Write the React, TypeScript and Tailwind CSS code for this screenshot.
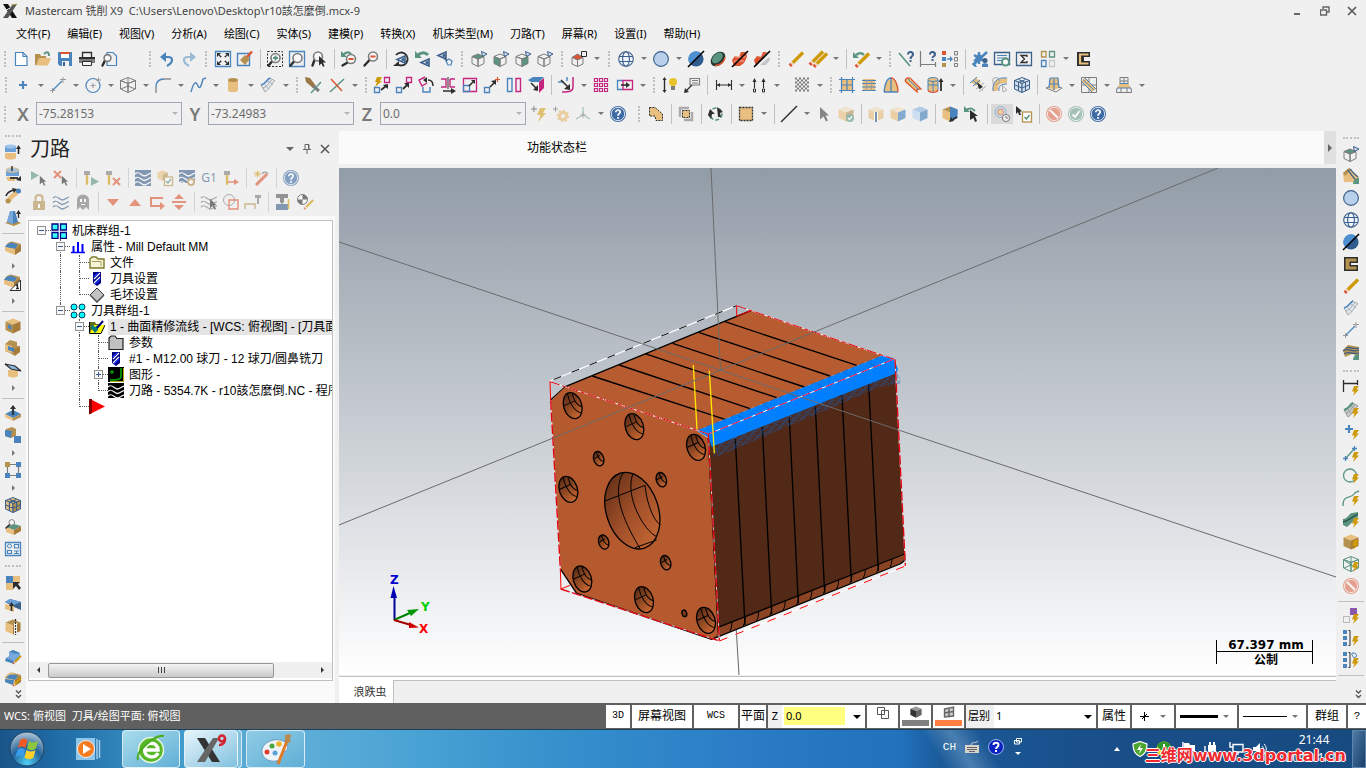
import React from 'react';

const BLUE = '#4a84bd';
const NAVY = '#3a5f8a';
const TAN = '#e8bf7e';
const WOOD = '#b5914f';
const GREEN = '#5a9480';
const RED = '#dc5430';
const PINK = '#c6257f';
const GOLD = '#cf9a08';
const INK = '#2d2d2d';
const GRAY = '#7d7d7d';

/* ---------- shared glyph parts ---------- */

const line = (d: string, c: string = INK, w: number = 1) => (
  <path d={d} fill="none" stroke={c} strokeWidth={w} />
);

const fill = (d: string, c: string) => <path d={d} fill={c} />;

const Cube = ({ top, left, right, edge = 'none' }: { top: string; left: string; right: string; edge?: string }) => (
  <g stroke={edge} strokeWidth={1} strokeLinejoin="round">
    <path d="M8 0.500L15.500 3.500L8 6.500L0.500 3.500Z" fill={top} />
    <path d="M0.500 3.500L8 6.500V15.500L0.500 12Z" fill={left} />
    <path d="M15.500 3.500L8 6.500V15.500L15.500 12Z" fill={right} />
  </g>
);

const Bolt = () => <path d="M11 6H16L13.500 9.500H16L10 16L11.500 11.500H9Z" fill={GOLD} />;

const Lens = ({ x = 9, y = 6, r = 4.5 }: { x?: number; y?: number; r?: number }) => (
  <g fill="none" strokeLinecap="round">
    <path d={`M${x - r + 1} ${y + r - 1}L1.500 14.500`} stroke={INK} strokeWidth={2.4} />
    <circle cx={x} cy={y} r={r} stroke={GRAY} strokeWidth={1.6} fill="#f7f7f7" />
  </g>
);

const Eye = ({ x = 0, y = 0 }: { x?: number; y?: number }) => (
  <g transform={`translate(${x} ${y})`}>
    <path d="M9 1L1 4.500L9 8Z" fill="none" stroke={NAVY} strokeWidth={1.6} />
    <circle cx={7} cy={4.5} r={1.5} fill={NAVY} />
  </g>
);

const Pencil = ({ x = 0, y = 0 }: { x?: number; y?: number }) => (
  <g transform={`translate(${x} ${y})`} strokeWidth={3.4}>
    <path d="M15 1.500L4.500 12" stroke={GOLD} />
    <path d="M3.500 13L1.800 14.700" stroke={RED} />
    <path d="M4.800 11.700L3.500 13" stroke="#f0d9c8" />
  </g>
);

const Arrow = () => <path d="M4 1L13 9.500H9.500L12 14.500L10 15.500L7.500 10.500L4 13.500Z" fill={INK} />;

const Waves = ({ c }: { c: string }) => (
  <g fill="none" stroke={c} strokeWidth={1.3}>
    <path d="M0 4C4 0 6 6 9 6S13 4 16 3" />
    <path d="M0 8.500C4 4.500 6 10.500 9 10.500S13 8.500 16 7.500" />
    <path d="M0 13C4 9 6 15 9 15S13 13 16 12" />
  </g>
);

const Ribbon = ({ c = '#a9a9a9', f = 'none' }: { c?: string; f?: string }) => (
  <g>
    <path d="M1 8C6 7 6 3 10 1L15 4C11 6 11 11 5 15Z" fill={f} stroke={c} strokeWidth={1} />
    <path d="M3 11C8 10 8 5 12.500 2.500M5 7.500L9 12M8 4L13 8" fill="none" stroke={c} strokeWidth={0.9} />
    <path d="M1 8C6 7 6 3 10 1" fill="none" stroke={BLUE} strokeWidth={1.4} />
  </g>
);

const Holder = () => (
  <g>
    <path d="M1 1H7V5H1Z" fill={GRAY} />
    <path d="M2.800 5H5.200V14L4 15.500L2.800 14Z" fill={GOLD} />
  </g>
);

const Help = () => (
  <g>
    <circle cx={8} cy={8} r={8} fill="#3f6ba5" />
    <circle cx={8} cy={8} r={6.7} fill="none" stroke="#fff" strokeWidth={0.8} />
    <path d="M5.800 6.200C5.800 3.200 10.400 3.400 10.200 6.200C10 7.800 8 7.700 8 9.800" fill="none" stroke="#fff" strokeWidth={1.7} />
    <rect x={7.1} y={11} width={1.8} height={1.8} fill="#fff" />
  </g>
);

const Stop = () => (
  <g opacity={0.5}>
    <circle cx={8} cy={8} r={8} fill={RED} />
    <circle cx={8} cy={8} r={6.600} fill="none" stroke="#fff" strokeWidth={0.8} />
    <path d="M4 4L12 12" stroke="#fff" strokeWidth={2} />
  </g>
);

const Globe = () => (
  <g fill="none" stroke={NAVY} strokeWidth={1.1}>
    <circle cx={8} cy={8} r={7.3} fill="#eef4fa" />
    <ellipse cx={8} cy={8} rx={3.4} ry={7.3} />
    <path d="M1.500 5.500H14.500M1.500 10.500H14.500" />
  </g>
);

const Ball = () => <circle cx={8} cy={8} r={7.4} fill="#b9d0ea" stroke={NAVY} strokeWidth={1.1} />;

const HalfBall = () => (
  <g>
    <circle cx={8} cy={8} r={7.6} fill="#2f5b8f" />
    <path d="M13.400 2.600A7.600 7.600 0 0 0 2.600 13.400Z" fill="#4c90d2" />
    <path d="M0 16L16 0" stroke="#000" strokeWidth={1.6} />
  </g>
);

const ViewCube = ({ face }: { face?: 'top' | 'left' | 'right' }) => (
  <g strokeLinejoin="round" strokeWidth={1} stroke={GRAY}>
    <path d="M7 3L13 5.500L7 8L1 5.500Z" fill={face === 'top' ? GREEN : 'none'} />
    <path d="M1 5.500L7 8V15.500L1 12.500Z" fill={face === 'left' ? GREEN : 'none'} />
    <path d="M13 5.500L7 8V15.500L13 12.500Z" fill={face === 'right' ? GREEN : 'none'} />
    <path d="M10.500 0.500L16 3L11.500 5.500Z" fill="#d7e2f0" stroke={NAVY} />
  </g>
);

const Slab = ({ blue = true }: { blue?: boolean }) => (
  <g>
    <path d="M0 7C2 3 4 2 7 1.500L16 4L10 9Z" fill={WOOD} />
    <path d="M0 7C2 4 4 3 7 2.500L13 5L10 9Z" fill={blue ? BLUE : WOOD} />
    <path d="M0 7L10 9V15L0 11Z" fill={TAN} />
    <path d="M16 4L10 9V15L16 11Z" fill="#a57b3b" />
  </g>
);

/* ---------- 16x16 icon set ---------- */

const icons: Record<string, React.ReactNode> = {
  new: <>{fill('M2.500 1.500H10L14 5.500V14.500H2.500Z', '#fff')}{line('M2.500 1.500H10L14 5.500V14.500H2.500Z', BLUE, 1.2)}{line('M10 1.500V5.500H14', BLUE, 1.2)}</>,
  open: <>{fill('M0 3H5L6 5H11V14H0Z', WOOD)}{fill('M4 7H16L13 14.500H1Z', TAN)}{line('M9 3C12 0 14 1 14 5', GREEN, 2)}</>,
  save: <>{fill('M1 1H15V15H3L1 13Z', BLUE)}{fill('M4 1H12V7H4Z', '#fff')}{fill('M3 1H13V3H3Z', RED)}{fill('M5 10H12V15H5Z', '#f0f0f0')}{fill('M6 11H8V15H6Z', NAVY)}</>,
  print: <>{line('M3.500 6V1.500H12.500V6', INK, 1.3)}{fill('M0 6H16V12H0Z', GRAY)}{fill('M0 6H16V8H0Z', INK)}{line('M3.500 10.500H12.500V14.500H3.500Z', INK)}{fill('M4 11H12V14H4Z', '#f4f4f4')}</>,
  preview: <>{line('M6 1.500H12L15.500 5V14.500H6Z', BLUE, 1.2)}<Lens x={6.5} y={7} r={3.4} /></>,
  undo: <>{line('M4 6H9C14 6 15 11 8 15', BLUE, 2.2)}{fill('M1 6L7 1V11Z', BLUE)}</>,
  redo: <g opacity={0.5}>{line('M12 6H7C2 6 1 11 8 15', BLUE, 2.2)}{fill('M15 6L9 1V11Z', BLUE)}</g>,
  fit: <>{line('M0.500 0.500H15.500V15.500H0.500Z', BLUE, 1.3)}{line('M4 4L12 12M12 4L4 12', INK, 1.2)}{fill('M2 2H6L2 6ZM14 2V6L10 2ZM2 14V10L6 14ZM14 14H10L14 10Z', INK)}{fill('M6 6H10V10H6Z', '#f0f0f0')}</>,
  repaint: <>{line('M0.500 2.500H12.500V14.500H0.500Z', BLUE, 1.4)}{fill('M3 9L8 4L13 8L8 14Z', WOOD)}{line('M10 6L15 0.500', RED, 2.4)}</>,
  zoomWin: <><rect x={0.5} y={0.5} width={15} height={15} fill="none" stroke={INK} strokeDasharray="2 1.5" /><Lens x={8.5} y={7} />{line('M6 7H11M8.500 4.500V9.500', GREEN, 1.8)}</>,
  zoomTgt: <>{line('M0.500 0.500H15.500V15.500H0.500Z', BLUE, 1.3)}<Lens x={8.5} y={7} /></>,
  zoomSel: <><Lens x={7} y={5.5} /><path d="M8 5L15 11.500H12L13.500 15L12 16L10.500 12.500L8 14.500Z" fill={INK} /></>,
  unzoomPrev: <><Lens x={10} y={8} />{line('M7.500 8H12.500', RED, 2)}{line('M2 4C6 0 8 1 10 3', GREEN, 2.4)}{fill('M0 0V6H6Z', GREEN)}</>,
  unzoom: <><Lens x={10} y={5.5} />{line('M7.500 5.500H12.500', RED, 2)}</>,
  rotate: <>{line('M3 4A6.500 6.500 0 1 1 4 13', INK, 1.8)}{fill('M0 15H6V10Z', INK)}<Eye x={3} y={4} /></>,
  prevView: <>{line('M3 4C8 0 11 2 13 4', GREEN, 3)}{fill('M0 0V7H7Z', GREEN)}<Eye x={5} y={7} /></>,
  nextView: <><Eye x={0} y={0} />{line('M9 10L12 8L15 10L14 14L11 14Z', BLUE, 1.2)}{line('M7 7L10 10', NAVY, 1.2)}</>,
  vTop: <ViewCube face="top" />,
  vFront: <ViewCube face="left" />,
  vRight: <ViewCube face="right" />,
  vIso: <ViewCube />,
  planes: <><g strokeLinejoin="round" stroke={GRAY}><path d="M6.500 4L12 6.500V13L6.500 15.500L1 13V6.500Z" fill="none" /><path d="M12 6.500L6.500 9L1 6.500L6.500 3Z" fill={RED} /><path d="M6.500 9V15.500" /></g>{line('M10.500 0.500H15.500V5.500H10.500Z', INK)}</>,
  globe: <Globe />,
  ball: <Ball />,
  halfBall: <HalfBall />,
  shade: <><ellipse cx={8} cy={8} rx={8.5} ry={6} transform="rotate(-45 8 8)" fill="#26392f" /><ellipse cx={7.3} cy={7.2} rx={6.5} ry={4} transform="rotate(-45 7 7)" fill={GREEN} />{line('M5 14.500C10 14.500 14.500 11 15 6', RED, 1.5)}</>,
  solid1: <>{fill('M0 9L3 5L7 6L9 1H14L15 6L12 12L8 15H2Z', RED)}{line('M3 6H14M2 10H12', '#f4b29f')}{line('M0 16L16 0', '#000', 1.6)}</>,
  solid2: <>{fill('M0 9L3 5L7 6L9 1H13L2 15Z', RED)}{fill('M15 6L16 9L12 14H6Z', '#c4c4c4')}{line('M0 16L16 0', '#000', 1.6)}</>,
  pencil: <Pencil />,
  pencils: <><Pencil x={-2} y={-1} /><Pencil x={2} y={1} /></>,
  undelete: <><Pencil x={1} y={1} />{line('M3 4C7 1 9 2 11 4', GREEN, 2.4)}{fill('M0 1V7H6Z', GREEN)}</>,
  anaPos: <>{line('M1 2L12 15', GREEN, 1.6)}{line('M10 3.500C10 0 15 0.500 15 3.500C15 5.500 12.500 5 12.500 8', NAVY, 2)}{fill('M11.500 9H13.500V11H11.500Z', NAVY)}</>,
  anaDist: <>{line('M0.500 0V16M15.500 11V16M1 13.500H15', GRAY, 1.2)}{line('M10 3.500C10 0 15 0.500 15 3.500C15 5.500 12.500 5 12.500 7', NAVY, 2)}{fill('M11.500 8H13.500V10H11.500Z', NAVY)}</>,
  attrs: <>{fill('M0 0H4V4H0Z', RED)}{fill('M0 6H4V10H0Z', BLUE)}{fill('M0 12H4V16H0Z', WOOD)}{line('M5 8H10', BLUE, 1.4)}{fill('M8 5L11 8L8 11Z', BLUE)}{line('M12.500 0.500H15.500V4H12.500ZM12.500 6.500H15.500V10H12.500ZM12.500 12.500H15.500V15.500H12.500Z', GRAY)}</>,
  config: <>{line('M2 4L12 10M12 4L2 10M7 1V13M1 14L15 1', BLUE, 2.4)}<circle cx={7} cy={7} r={3.6} fill={BLUE} /><circle cx={13} cy={9.500} r={2.500} fill={NAVY} />{fill('M10 16V13L13 12L16 13V16Z', BLUE)}{fill('M0 13L3 16H5L2 11Z', BLUE)}</>,
  regen: <>{line('M0.500 1.500H15.500V13.500H0.500Z', NAVY, 1.3)}{line('M3 4.500H13M3 7H13M3 9.500H8', BLUE)}<circle cx={11.500} cy={11} r={3.500} fill="#fff" stroke={GREEN} strokeWidth={2} /></>,
  sigma: <>{line('M0.500 1.500H15.500V14.500H0.500Z', NAVY, 1.3)}{line('M11 6V4.500H5L8.500 8L5 11.500H11V10', INK, 1.3)}</>,
  tiles: <>{line('M1.500 0.500H6V6H1.500Z', WOOD, 1.3)}{line('M9.500 0.500H14.500V6H9.500Z', GREEN, 1.3)}{line('M1.500 9.500H6V15.500H1.500Z', BLUE, 1.3)}{line('M9.500 9.500H14.500V15.500H9.500Z', '#c9c9c9', 1.3)}</>,
  spiral: <>{fill('M2 1H15V6H9V10H15V15H2Z', INK)}{line('M13.500 3.500H5V12.500H13.500', TAN, 2.2)}</>,

  plus: line('M8 4V12M4 8H12', BLUE, 2.2),
  lineDraw: <>{line('M2 14L12 4', BLUE, 1.3)}{line('M0 13.500H5M2.500 11V16M10 2.500H16M13 0V6', '#9a9a9a')}</>,
  circle: <><circle cx={8} cy={8.500} r={7} fill="none" stroke={BLUE} strokeWidth={1.2} />{line('M5.500 8.500H10.500M8 6V11M11 3H16M13.500 0.500V5.500', '#9a9a9a')}</>,
  wireCube: <g><Cube top="none" left="none" right="none" edge={GRAY} />{line('M1 12L8 9L15 12M8 1V9', GRAY)}</g>,
  fillet: <>{line('M1 16V10', GRAY, 1.3)}{line('M1 10C1 4 5 2 9 2', BLUE, 1.4)}{line('M9 2H16', GRAY, 1.3)}</>,
  spline: line('M1 15C4 4 6 4 8 9S12 6 13 2L16 1', BLUE, 1.4),
  cyl: <>{fill('M3 3H13V13C13 16 3 16 3 13Z', TAN)}<ellipse cx={8} cy={3} rx={5} ry={2} fill={WOOD} /></>,
  ribbon: <Ribbon f="#dfe7ef" />,
  trim: <>{fill('M0 0L5 1L11 9L8 11L1 5Z', '#9c7746')}{line('M8 9L14 14', GRAY, 3)}{line('M6 16L16 5', GREEN, 1.4)}</>,
  breakX: <>{line('M1 15L15 2', GREEN, 1.5)}{line('M2 2L13 14', RED, 1.4)}</>,
  xf1: <>{fill('M3 0H8L6 4H8L1 10L3 5H1Z', GOLD)}{line('M10.500 0.500H15.500V5.500H10.500Z', PINK, 1.3)}{line('M0.500 10.500H5.500V15.500H0.500Z', BLUE, 1.3)}{line('M7 13L12 9', INK, 1.8)}{fill('M14 7V12L9 8Z', INK)}</>,
  xf2: <>{line('M10.500 0.500H15.500V5.500H10.500Z', PINK, 1.3)}{line('M0.500 10.500H5.500V15.500H0.500Z', BLUE, 1.3)}{line('M7 12L11 8', INK, 1.8)}{fill('M13 6V11L8 6Z', INK)}</>,
  xf3: <>{line('M7 0L1 3L4 9L9 6', PINK, 1.4)}{line('M5 10V15H12V10', BLUE, 1.4)}{line('M10 3C14 3 15 6 15 9', INK, 1.5)}{fill('M9 0V6L5 3Z', INK)}</>,
  xf4: <>{line('M1 2H6V10H1M10 2V10M15 2H10M15 10H10', PINK, 1.4)}{line('M8 0V12', INK)}{line('M3 14H13', INK, 1.5)}{fill('M16 14L11 11V17Z', INK)}</>,
  scale: <>{line('M1.500 1.500H14.500V14.500H1.500Z', PINK, 1.3)}{line('M1.500 8.500H7.500V14.500H1.500Z', BLUE, 1.3)}{line('M7 9L12 4', INK, 1.6)}{fill('M13 3V7L9 3Z', INK)}</>,
  moveTo: <>{line('M0.500 10.500H5.500V15.500H0.500Z', BLUE, 1.3)}{line('M6 10L11 5', INK, 1.6)}{fill('M12 3V8L7 4Z', INK)}{line('M11 2.500H16M13.500 0V5', RED, 1.2)}</>,
  offset: <>{line('M1.500 1.500H6V14.500H1.500Z', BLUE, 1.4)}{line('M10 1.500H14.500V14.500H10Z', PINK, 1.4)}</>,
  project: <>{fill('M0 3L5 0H16L11 5H3Z', BLUE)}{fill('M11 5L16 1V11L11 16Z', PINK)}{line('M3 6L9 12', INK, 1.6)}{fill('M10 14V8L5 13Z', INK)}</>,
  offsetC: <>{line('M0 5H6', BLUE, 1.4)}{line('M15 0V10C15 14 12 15 4 15', PINK, 1.5)}{line('M9 0V4', BLUE, 1.4)}{line('M3 3L11 11', INK, 1.6)}{fill('M12 13V7L6 12Z', INK)}</>,
  array: line('M1.500 1.500H4.500V4.500H1.500ZM6.500 1.500H9.500V4.500H6.500ZM11.500 1.500H14.500V4.500H11.500ZM1.500 6.500H4.500V9.500H1.500ZM6.500 6.500H9.500V9.500H6.500ZM11.500 6.500H14.500V9.500H11.500ZM1.500 11.500H4.500V14.500H1.500ZM6.500 11.500H9.500V14.500H6.500ZM11.500 11.500H14.500V14.500H11.500Z', PINK, 1.2),
  stretch: <>{line('M6 3.500H0.500V12.500H6', BLUE, 1.3)}{line('M6 3.500H15.500V12.500H6Z', PINK, 1.3)}{line('M4 8H11', INK, 1.6)}{fill('M13 8L9 5V11Z', INK)}</>,
  lamp: <>{line('M2.500 2V14', INK, 1.4)}{fill('M2.500 0L4.500 3H0.500ZM2.500 16L4.500 13H0.500Z', INK)}<circle cx={11} cy={5} r={4} fill="#e8c42a" />{fill('M9 9H13V13H9Z', GRAY)}</>,
  note: <>{line('M6 1.500H15.500V8H6Z', GRAY, 1.2)}{line('M8 3.500H14M8 6H14', GRAY)}{line('M8 8L2 14', INK, 1.2)}{fill('M0 16L1 11L5 15Z', INK)}</>,
  dim: <>{line('M0.500 3V13M15.500 3V13M1 8H15', INK, 1.1)}{fill('M1 8L4 6V10ZM15 8L12 6V10Z', INK)}</>,
  ordDim: <>{line('M3.500 3V11M12.500 3V11', INK, 1.1)}{fill('M3.500 1L5.500 5H1.500ZM12.500 1L14.500 5H10.500Z', INK)}{line('M2.500 12H4.500V15H2.500ZM11.500 12H13.500V15H11.500Z', INK)}</>,
  hatch: <>{[1, 3, 5, 7, 9, 11, 13].map(y => <path key={y} d={`M1 ${y + 0.5}H15`} stroke={GRAY} strokeDasharray="2 2" strokeDashoffset={y % 4 === 1 ? 0 : 2} strokeWidth={2} />)}</>,
  surf1: <>{fill('M2 2H14V14H2Z', TAN)}{line('M0 2.500H16M0 13.500H16M2.500 0V16M13.500 0V16M8 2V14M2 8H14', BLUE, 1.2)}</>,
  surf2: <>{fill('M2 2H14V14H2Z', TAN)}{line('M1 3.500H15M1 6.500H15M1 10H15M1 13.500H15', BLUE, 1.2)}{line('M5.500 3V14M10.500 3V14', '#999', 0.8)}</>,
  surf3: <>{fill('M1 15C2 -2 14 -2 15 15Z', TAN)}{line('M1 15C2 6 4 1 8 1V15M1 15H15', BLUE, 1.3)}{line('M8 1C12 1 15 8 15 15', RED, 1.3)}</>,
  surf4: <>{fill('M0 4C1 0 5 0 7 3L16 12L13 13V16L1 6Z', TAN)}{line('M0 4L12 15V12H16L7 3C5 0 1 0 0 4', RED, 1.2)}{line('M3 2L14 13', BLUE)}</>,
  surf5: <>{fill('M1 2H11V14H1Z', TAN)}<ellipse cx={6} cy={2.500} rx={5} ry={2} fill={TAN} stroke={BLUE} />{line('M1 3V13M11 3V13M6 4V15M1 8H11', BLUE)}{line('M1 13C2 16 10 16 11 13', RED, 1.3)}{line('M14 14V4', INK, 1.8)}{fill('M14 1L16.500 5H11.500Z', INK)}</>,
  surf6: <>{fill('M1 5L6 1L11 5L6 9Z', TAN)}{line('M0 6L7 0M3 9L10 3M3 3L8 8', BLUE)}{line('M6 12L14 6M9 15L16 9M8 9L13 14', '#a9a9a9')}{fill('M7 5L13 10L9 12Z', INK)}</>,
  surf7: <>{line('M4 14C2 7 6 3 15 4', TAN, 5)}{line('M1 14C0 5 5 0 15 1M7 14C6 9 9 7 15 7', BLUE)}<circle cx={4} cy={4} r={3.500} fill="none" stroke="#aaa" />{line('M10 8L15 13L11 15Z', '#aaa')}</>,
  surf8: <><Cube top="#e6eef6" left="#d3dfec" right="#d3dfec" edge={NAVY} />{line('M1 8L8 11L15 8M4.500 2.500L11.500 5.500V14M11.500 2.500L4.500 5.500V14', NAVY)}</>,
  mold1: <>{line('M0 11L6 8L16 11L10 15Z', GRAY)}{fill('M4 1H12L13 11L8 13L3 11Z', TAN)}{line('M4 1H12L13 11M4 1L3 11M8 2V13M3 7H12', BLUE, 1.2)}</>,
  mold2: <>{line('M0.500 0.500H15.500V15.500H0.500ZM8 0V16M0 8H16', GRAY)}{fill('M0 4L4 1L15 12L11 15Z', TAN)}{line('M0 4L11 15M4 1L15 12M2 2.500L13 13', BLUE)}</>,
  mold3: <>{line('M4 0.500H12V7M4 7V0.500M8 0V7M4 4H12', GRAY)}{fill('M4 6H12L15 11H1Z', TAN)}{line('M4 6.500H12M1 11H15', BLUE, 1.2)}{line('M1 11L0.500 15.500H15.500L15 11M5 11V15M11 11V15', GRAY)}</>,

  fastBolt: <g opacity={0.55}>{line('M0 3H6M3 0V6', INK)}{fill('M9 2H15L12 7H15L7 16L9.500 9H6Z', GOLD)}</g>,
  fastGear: <g opacity={0.7}>{line('M0 3H5M2.500 0.500V5.500', GRAY)}<circle cx={10} cy={10} r={3.6} fill="none" stroke={TAN} strokeWidth={3} /><circle cx={10} cy={10} r={5.5} fill="none" stroke={TAN} strokeWidth={1.6} strokeDasharray="2.2 2" /></g>,
  tripod: <g opacity={0.6}>{line('M8 1V9L1 13M8 9L15 13', GREEN)}{line('M5 9H11M8 6V12', GRAY)}</g>,
  help: <Help />,
  chain1: <path d="M1.500 1.500H7L14.500 8V14.500H8L7 10H1.500Z" fill={TAN} stroke={INK} strokeDasharray="2 1" />,
  chain2: <>{line('M2 11V2H11', '#aaa', 2.4)}{line('M14 6V14H6', '#aaa', 2.4)}<rect x={4.500} y={4.500} width={7} height={7} fill={TAN} stroke={INK} strokeDasharray="2 1" /></>,
  swap: <><circle cx={8} cy={8} r={6} fill="none" stroke={GREEN} strokeWidth={1.6} strokeDasharray="4 2" />{fill('M2 3L7 8L4 8L3 13L0 9Z', INK)}{fill('M9 1L15 6L12 7L13 11L10 11Z', INK)}</>,
  rectSel: <rect x={1.500} y={1.500} width={13} height={13} fill={TAN} stroke={INK} strokeWidth={1.3} strokeDasharray="2 1" />,
  slash: line('M0 16L16 0', INK, 1.4),
  pick: <g opacity={0.55}><Arrow /></g>,
  solidOk: <g opacity={0.6}><Cube top="#f3dfbc" left={TAN} right={WOOD} /><circle cx={12} cy={12} r={4} fill={GREEN} />{line('M10 12L11.500 13.500L14 10.500', '#fff', 1.3)}</g>,
  box1: <g opacity={0.65}><Cube top="#f3dfbc" left={TAN} right={TAN} />{line('M8 6V16', '#fff', 4)}{line('M8 6V16', NAVY, 2)}</g>,
  box2: <g opacity={0.65}><Cube top="#f3dfbc" left={TAN} right={BLUE} /></g>,
  box3: <g opacity={0.65}><Cube top="#8db8e0" left="#b9d5ef" right={BLUE} /></g>,
  box4: <><Cube top={WOOD} left={TAN} right={BLUE} />{fill('M8 0.500L15.500 3.500V8L8 6.500Z', BLUE)}{line('M15 11L10 14', INK, 1.6)}{fill('M7 16L9 11L12 15Z', INK)}</>,
  undoSel: <>{line('M2 4C7 1 9 3 11 5', GREEN, 2)}{fill('M0 0V6H6Z', GREEN)}{fill('M6 4L14 10H11L13 15L11 16L9.500 12L6 14Z', INK)}</>,
  disc: <><circle cx={6.500} cy={6} r={5.500} fill="#cdd8e4" stroke="#8fb0d0" /><circle cx={6.500} cy={6} r={3} fill="#e8cfa8" stroke={RED} strokeOpacity={0.5} /><circle cx={12} cy={12} r={3.6} fill="#eee" stroke={GRAY} />{line('M12 10V12H14', GRAY)}</>,
  verify: <>{fill('M0 0L6 5L4 6L5 9L3 9L2 6L0 8Z', INK)}<rect x={6.500} y={6} width={9} height={10} fill="#fff" stroke={WOOD} strokeWidth={1.3} />{line('M8.500 11L10.500 13L13.500 9', GREEN, 1.5)}</>,
  stop: <Stop />,
  okDim: <g opacity={0.5}><circle cx={8} cy={8} r={8} fill={GREEN} /><circle cx={8} cy={8} r={6.600} fill="none" stroke="#fff" strokeWidth={0.8} />{line('M4.500 8.500L7 11L11.500 5', '#fff', 2)}</g>,

  l1: <>{fill('M0 2H11V8H0Z', '#6ba1d8')}<ellipse cx={5.500} cy={2.500} rx={5.500} ry={2} fill="#9cc3ea" />{fill('M0 9H11V14C9 16 2 16 0 14Z', TAN)}{line('M13.500 10V4', INK, 1.6)}{fill('M13.500 1L16 5H11Z', INK)}</>,
  l2: <>{fill('M1 4H14V10H1Z', '#6ba1d8')}<ellipse cx={7.500} cy={4} rx={6.500} ry={2.200} fill="#9cc3ea" stroke={TAN} />{fill('M1 11H10V15H3Z', TAN)}{line('M7 0V5', INK, 1.4)}{line('M5 12H13', INK, 1.8)}{fill('M16 10V15L11 14Z', INK)}</>,
  l3: <>{line('M4 14C4 8 8 9 12 4', TAN, 4.5)}<circle cx={13.500} cy={3} r={2.500} fill={BLUE} /><circle cx={3} cy={13} r={2.500} fill={WOOD} />{line('M1 8C2 4 5 3 9 2', INK, 1.6)}{fill('M12 1L7 0L9 5Z', INK)}</>,
  l4: <>{fill('M0 13L8 9L16 13L9 16Z', WOOD)}{fill('M5 1H10L13 12L8 14L2 12Z', BLUE)}{fill('M5 1H8V14L2 12Z', '#79a9da')}{line('M13.500 8V3', INK, 1.3)}{fill('M13.500 0L16 4H11Z', INK)}</>,
  l5: <Slab />,
  l6: <><g transform="translate(-1 -2)"><Slab /></g><path d="M15.500 5V15.500H5Z" fill="#fff" stroke={INK} />{line('M11 11L12.500 9.500V13.500M11 13.500H14', INK, 1.3)}</>,
  l7: <><Cube top={TAN} left={WOOD} right="#a57b3b" />{fill('M3 6.500L6.500 8V12L3 10Z', BLUE)}</>,
  l8: <>{fill('M0 4L5 0L12 2V6H15V12L10 16L5 13L0 11Z', WOOD)}{fill('M0 4L7 6V13L0 11Z', TAN)}{fill('M3 6L9 8V12L3 10Z', BLUE)}{fill('M9 9L15 7V12L9 15Z', '#a57b3b')}</>,
  l9: <>{fill('M3 8H13V14C10 16 6 16 3 14Z', TAN)}{fill('M0 2L10 4L16 9L6 7Z', '#8db8e0')}{line('M0 2L10 4L16 9L6 7Z', INK, 1.2)}</>,
  l10: <>{fill('M0 9L8 5L16 9L8 13Z', BLUE)}{fill('M0 9L8 13V16L0 12Z', TAN)}{fill('M16 9L8 13V16L16 12Z', WOOD)}{line('M8 10V3', INK, 1.8)}{fill('M8 0L11 4H5Z', INK)}</>,
  l11: <>{fill('M1 2L7 0L11 2V9L6 11L0 9Z', WOOD)}{fill('M0 3L7 4L6 11L0 9Z', BLUE)}{fill('M9 9H16V16H9Z', BLUE)}</>,
  l12: <>{line('M2.500 2.500H13.500V13.500H2.500Z', GRAY, 1.2)}{fill('M0 0H5V5H0Z', WOOD)}{fill('M11 0H16V5H11ZM0 11H5V16H0ZM11 11H16V16H11Z', BLUE)}</>,
  l13: <><Cube top={TAN} left={TAN} right={WOOD} edge={NAVY} />{line('M1 8L8 11L15 8M4.500 2.500L11.500 5.500V14M11.500 2.500L4.500 5.500V14', NAVY, 1.2)}</>,
  l14: <>{fill('M1 8L9 5L16 7L9 11Z', GREEN)}{fill('M1 8L9 11V16L1 13Z', TAN)}{fill('M16 7L9 11V16L16 12Z', '#a57b3b')}<g transform="scale(.62)"><Lens x={11} y={5.500} r={4.500} /></g></>,
  l15: <>{line('M0.500 1.500H15.500V14.500H0.500Z', BLUE, 1.3)}<circle cx={4.500} cy={5} r={2} fill="none" stroke={BLUE} />{line('M9.500 3.500H13.500V7H9.500ZM2.500 9.500H6.500V12.500H2.500ZM9 10H14M9 12.500H14M11.500 10V13', BLUE, 1.2)}</>,
  l16: <>{fill('M1 1H8V8H1Z', BLUE)}{fill('M8 1H15V8H8ZM1 8H8V15H1Z', TAN)}{fill('M8 7H15L13 9L16 13L14 15L11 11L8 14Z', INK)}</>,
  l17: <>{fill('M0 5L5 2L16 5V13L9 10Z', NAVY)}{fill('M0 5L5 2L16 5L9 8Z', '#6ba1d8')}{fill('M0 7L9 9V15L0 12Z', TAN)}{line('M6.500 14V8', INK, 1.6)}{fill('M6.500 5L9 9H4Z', INK)}</>,
  l18: <><Cube top={WOOD} left={TAN} right="#a57b3b" />{fill('M9 4H12V15H9Z', '#fff')}<path d="M10.500 0V16" stroke={INK} strokeWidth={1.3} strokeDasharray="2 1" /></>,
  l19: <>{fill('M1 9L4 7V3L8 1L15 4V9L10 14L1 12Z', '#79a9da')}{fill('M1 9L9 12V15L0 12ZM4 3L11 5L15 4L8 1Z', BLUE)}<g transform="translate(7 6) scale(.6)"><Pencil /></g></>,
  l20: <><Slab />{fill('M0 8L9 9L8 14L0 11Z', BLUE)}{line('M0 7C3 3 5 2 9 3', TAN, 1.5)}<g transform="translate(7 6) scale(.6)"><Pencil /></g></>,

  r2: <>{fill('M0 5L6 0L16 9V14L1 14Z', TAN)}{fill('M0 5L6 0L8 2L2 8Z', WOOD)}{line('M4 2C7 3 8 8 13 12M7 1C9 3 11 6 15 9', NAVY, 1.3)}{fill('M16 16H10C10 13 12 10 16 10Z', GREEN)}</>,
  r6: <>{fill('M1 1H15V7H8V9H15V15H1Z', INK)}{fill('M2.500 2.500H13.500V5.500H6.500V10.500H13.500V13.500H2.500Z', WOOD)}</>,
  r10: <>{fill('M0 6L5 1L16 3V12L9 10L2 13Z', WOOD)}{line('M0 7C5 3 9 9 16 6M1 10C5 6 9 11 16 9M3 4C7 2 9 6 16 4', NAVY, 1.2)}{fill('M16 16H10C10 13 12 10 16 10Z', GREEN)}</>,
  q1: <>{line('M0.500 0V12M14.500 0V5M1 3.500H14', INK, 1.3)}<Bolt /></>,
  q2: <><Ribbon c="#9a9a9a" f="#c9c9c9" />{line('M1 8C6 7 6 3 10 1', GREEN, 2)}<Bolt /></>,
  q3: <>{line('M6 1V9M2 5H10', BLUE, 2.2)}<Bolt /></>,
  q4: <>{line('M3 12L11 3', GREEN, 1.3)}{line('M0 12.500H5M2.500 10V15M9 2.500H14M11.500 0V5', BLUE, 1.3)}<Bolt /></>,
  q5: <><circle cx={7} cy={7.500} r={6.500} fill="none" stroke={GREEN} strokeWidth={1.3} /><Bolt /></>,
  q6: <>{line('M0 16C0 4 8 9 11 4C12 2 14 2 16 1', GREEN, 1.4)}<Bolt /></>,
  q7: <>{fill('M0 7C5 7 6 1 9 1L15 0V5C12 7 9 11 4 15L0 13Z', GREEN)}{line('M0 10C6 9 8 5 15 2', '#2a4a40', 1.3)}<Bolt /></>,
  q8: <><Cube top={TAN} left={WOOD} right="#a57b3b" /><Bolt /></>,
  q9: <><g><Cube top="none" left="none" right="none" edge={GREEN} />{line('M1 12L8 9L15 12M8 1V9M1 4L8 9', GREEN)}</g><Bolt /></>,
  s1: <>{fill('M7 0H14V7H7Z', '#8b59ab')}{line('M0.500 8.500H6.500V14.500H0.500Z', '#b9b9b9')}<Bolt /></>,
  s2: <>{fill('M0 0H4V4H0ZM0 6H4V10H0ZM0 12H4V16H0Z', BLUE)}{line('M5.500 0.500H7V15.500H5.500', INK)}<Bolt /></>,
  s3: <>{fill('M0 0H4V4H0ZM0 6H4V10H0ZM0 12H4V16H0Z', BLUE)}{line('M5.500 0.500H7V15.500H5.500', INK)}{line('M9 1H12L14 4L11 6L9 3Z', BLUE)}<Bolt /></>,

  p1: <>{fill('M0 1L8 5.500L0 10Z', GREEN)}<g transform="translate(6 5) scale(.7)"><Arrow /></g></>,
  p2: <>{line('M1 1L8 8M8 1L1 8', RED, 2)}<g transform="translate(6 5) scale(.7)"><Arrow /></g></>,
  p3: <><Holder />{fill('M8 7L16 11.500L8 16Z', GREEN)}</>,
  p4: <><Holder />{line('M8 8L15 15M15 8L8 15', RED, 2)}</>,
  p5: <>{fill('M0 0H16V16H0Z', NAVY)}<Waves c="#fff" /></>,
  p6: <><g transform="scale(.7)"><Cube top={TAN} left={TAN} right={WOOD} /></g><rect x={7.500} y={7} width={8} height={8.500} fill="#fff" stroke={WOOD} strokeWidth={1.3} />{line('M9 11L11 13L14 9', GREEN, 1.5)}</>,
  p7: <>{fill('M0 0H16V13H0Z', NAVY)}<Waves c="#fff" /><circle cx={12} cy={12} r={3} fill="#fff" stroke={WOOD} strokeWidth={2} /></>,
  p9: <><Holder />{line('M5 12H13', RED, 1.5)}{fill('M16 12L11 9V15Z', RED)}</>,
  p10: <>{line('M3 15L14 4', RED, 3)}{line('M9 4C11 1 14 2 15 4', GRAY, 1.5)}{line('M1 4H8M4.500 0.500V7.500M2 1.500L7 6.500M7 1.500L2 6.500', GOLD)}</>,
  m1: <>{fill('M2 7H14V16H2Z', WOOD)}{line('M4.500 7V4C4.500 0 11.500 0 11.500 4V7', WOOD, 2)}{fill('M7 10H9V14H7Z', '#fff')}</>,
  m2: <Waves c={NAVY} />,
  m3: <>{fill('M2 16V6C2 -1 14 -1 14 6V16L11 13L8 16L5 13Z', '#777')}{fill('M5 5H7V8H5ZM9 5H11V8H9ZM6 10H10V11H6Z', '#fff')}</>,
  m4: fill('M2 5H14L8 12Z', RED),
  m5: fill('M2 12H14L8 5Z', RED),
  m6: <>{line('M14 4H2V12H11', RED, 2)}{fill('M16 12L11 8V16Z', RED)}</>,
  m7: <>{fill('M8 0L13 5H3ZM8 16L13 11H3Z', RED)}{line('M1 8H15', RED, 2)}</>,
  m8: <><Waves c={GRAY} /><g transform="translate(6 4) scale(.75)"><Arrow /></g></>,
  m9: <><circle cx={6} cy={6} r={5.500} fill="none" stroke={GRAY} />{line('M6 6H15V15H6Z', RED, 1.4)}</>,
  m10: <>{line('M0 15V10H10V15', WOOD, 1.4)}{fill('M10 1H16V4H14V10H12V4H10Z', GRAY)}</>,
  m11: <>{fill('M1 0H13V4H9V8L7 10L5 8V4H1Z', '#555')}{fill('M1 10H13V16H1Z', NAVY)}{line('M13.500 5V15', GOLD, 1.6)}</>,
  m12: <><circle cx={5.500} cy={5.500} r={5} fill="#fff" stroke={INK} />{fill('M5.500 0.500A5 5 0 0 1 10.500 5.500H0.500A5 5 0 0 0 5.500 10.500Z', INK)}<g transform="translate(6 5) scale(.68)"><Pencil /></g></>,
};

const Icon = ({ name }: { name: string }) => (
  <svg viewBox="0 0 16 16" className="h-4 w-4 overflow-visible" aria-hidden="true">
    {icons[name]}
  </svg>
);

/* ---------- toolbars ---------- */

const rowOne = 'grip0 new open save print preview wide grip undo redo grip fit repaint sep zoomWin zoomTgt zoomSel sep unzoomPrev unzoom sep rotate prevView nextView grip vTop vFront vRight vIso grip planes caret grip globe caret ball caret halfBall shade solid1 solid2 grip pencil pencils caret sep undelete caret grip0 anaPos anaDist attrs sep config regen sigma gap tiles caret spiral';
const rowTwo = 'grip plus caret lineDraw caret circle caret wireCube caret fillet caret spline caret cyl caret ribbon caret grip0 trim gap breakX caret grip0 xf1 xf2 xf3 xf4 scale moveTo offset project sep offsetC caret array gap stretch caret grip0 lamp note sep gap dim caret ordDim caret blank hatch caret grip0 surf1 surf2 surf3 surf4 surf5 caret sep surf6 surf7 surf8 sep gap mold1 caret mold2 caret mold3 caret';
const rowThree = 'gap fastBolt fastGear tripod caret help gap gap grip chain1 sep chain2 sep swap sep rectSel caret sep slash caret pick solidOk sep box1 box2 box3 sep box4 undoSel sep disc verify sep stop okDim help';
const leftBar = 'grip0 l1 l2 l3 l4 sep l5 caret l6 caret sep l7 l8 l9 caret sep l10 l11 caret l12 caret l13 l14 l15 grip l16 l17 l18 sep l19 l20';
const rightBar = 'gap grip0 vTop r2 ball globe halfBall r6 pencil ribbon lineDraw r10 gap grip q1 q2 q3 q4 q5 q6 q7 q8 q9 stop sep s1 s2 s3 sep';
const panelOne = 'p1 p2 sep p3 p4 sep p5 p6 p7 g1 p9 sep p10 sep help';
const panelTwo = 'm1 m2 m3 sep m4 m5 m6 m7 sep m8 m9 m10 sep m11 m12';

const Tools = ({ items }: { items: string }) => (
  <>
    {items.split(' ').map((t, i) => {
      if (t === 'sep') return <span key={i} className="flex h-5 w-2 shrink-0 justify-center"><i className="w-px bg-[#c0c0c0]" /></span>;
      if (t === 'gap') return <span key={i} className="w-0.5 shrink-0" />;
      if (t === 'blank') return <span key={i} className="w-2 shrink-0" />;
      if (t === 'wide') return <span key={i} className="w-6 shrink-0" />;
      if (t === 'grip' || t === 'grip0')
        return (
          <span key={i} className={`flex shrink-0 justify-center ${t === 'grip' ? 'w-3' : 'w-2.5'}`}>
            <i className="h-4 border-l-2 border-dotted border-[#c0c0c0]" />
          </span>
        );
      if (t === 'caret')
        return (
          <button key={i} aria-label="more" className="flex w-[13px] shrink-0 items-center justify-center">
            <i className="border-x-3 border-t-3 border-x-transparent border-t-[#777]" />
          </button>
        );
      return (
        <button key={i} aria-label={t} className={`flex h-5 w-[22px] shrink-0 items-center justify-center ${t === 'disc' ? 'bg-[#dadada]' : ''}`}>
          {t === 'g1' ? <span className="text-[12px] text-[#3a5f8a]">G1</span> : <Icon name={t} />}
        </button>
      );
    })}
  </>
);

const SideTools = ({ items }: { items: string }) => (
  <>
    {items.split(' ').map((t, i) => {
      if (t === 'sep') return <span key={i} className="flex h-2 w-full shrink-0 items-center px-0.5"><i className="h-px w-full bg-[#c0c0c0]" /></span>;
      if (t === 'gap') return <span key={i} className="h-0.5 shrink-0" />;
      if (t === 'grip' || t === 'grip0')
        return (
          <span key={i} className={`flex shrink-0 items-center ${t === 'grip' ? 'h-3' : 'h-2.5'}`}>
            <i className="w-4 border-t-2 border-dotted border-[#c0c0c0]" />
          </span>
        );
      if (t === 'caret')
        return (
          <button key={i} aria-label="more" className="flex h-[13px] shrink-0 items-center justify-center">
            <i className="border-y-3 border-l-3 border-y-transparent border-l-[#777]" />
          </button>
        );
      return (
        <button key={i} aria-label={t} className="flex h-[22px] w-[22px] shrink-0 items-center justify-center">
          <Icon name={t} />
        </button>
      );
    })}
  </>
);

const Coord = ({ axis, value }: { axis: string; value: string }) => (
  <label className="flex shrink-0 items-center">
    <span className="w-[26px] text-center text-lg leading-5 font-semibold text-[#7a7a7a]">{axis}</span>
    <span className="relative flex">
      <select className="h-[23px] w-[146px] appearance-none border border-[#a0a8b4] bg-[#f0f0f0] px-0.5 text-[12px] leading-5 text-[#6d6d6d]">
        <option>{value}</option>
      </select>
      <i className="pointer-events-none absolute top-2.5 right-1 border-x-3 border-t-3 border-x-transparent border-t-[#b5b5b5]" />
    </span>
  </label>
);

/* ---------- operations tree ---------- */

type Cell = 'none' | 'root' | 'line' | 'tee' | 'end' | 'teeMinus' | 'endMinus' | 'teePlus';

interface TreeRow {
  cells: Cell[];
  icon: React.ReactNode;
  text: string;
  selected?: boolean;
}

const drill = <>{fill('M4 1H12V12L8 15L4 12Z', '#000080')}{line('M5 8L11 2M5 12L11 6', '#fff', 1.2)}{line('M5 6L9 2M6 13L11 8', '#1530ff', 1.5)}</>;

const tree: TreeRow[] = [
  { cells: ['root'], text: '机床群组-1', icon: <g fill="#3ff" stroke="#000080" strokeWidth={1.3}><path d="M1 1H7V7H1ZM9.500 1H15.500V7H9.500ZM1 9.500H7V15.500H1ZM9.500 9.500H15.500V15.500H9.500Z" /></g> },
  { cells: ['none', 'teeMinus'], text: '属性 - Mill Default MM', icon: <>{line('M3.500 7V13M8 3V13M12.500 5V13', '#0000ff', 2)}{line('M1 13.500H15', '#0000ff', 1.5)}</> },
  { cells: ['none', 'line', 'tee'], text: '文件', icon: <>{fill('M1 4L3 2H7L9 4H15V13H1Z', '#f5f3d8')}{line('M1 13V4L3 2H7L9 4H15V13Z', '#7d7a2c', 1.4)}{line('M3 6.500H12V11', '#a5a25c')}</> },
  { cells: ['none', 'line', 'tee'], text: '刀具设置', icon: drill },
  { cells: ['none', 'line', 'end'], text: '毛坯设置', icon: <><path d="M8 1L15 8L8 15L1 8Z" fill="#c3c3c3" stroke="#333" />{line('M1 8L8 15L15 8', '#555', 1.6)}</> },
  { cells: ['none', 'endMinus'], text: '刀具群组-1', icon: <g fill="#0ff" stroke="#0a3a5a"><circle cx={4} cy={4} r={3} /><circle cx={12} cy={4} r={3} /><circle cx={4} cy={12} r={3} /><circle cx={12} cy={12} r={3} /></g> },
  { cells: ['none', 'none', 'teeMinus'], selected: true, text: '1 - 曲面精修流线 - [WCS: 俯视图] - [刀具面', icon: <>{fill('M0 3H6L7 5H12V14H0Z', '#6b6b10')}{fill('M5 6H16L12 14H1Z', '#ff0')}{fill('M3 5L6 8L9 6V11L6 14L2 9Z', '#007a7a')}{line('M8 9L14 2', '#000080', 2)}{line('M0.500 3V14.500H12L16 6', '#000')}</> },
  { cells: ['none', 'none', 'line', 'tee'], text: '参数', icon: <path d="M1 3L3 1H7L9 3.500H15V14.500H1Z" fill="#c0c0c0" stroke="#222" strokeWidth={1.2} /> },
  { cells: ['none', 'none', 'line', 'tee'], text: '#1 - M12.00 球刀 - 12 球刀/圆鼻铣刀', icon: drill },
  { cells: ['none', 'none', 'line', 'teePlus'], text: '图形 -', icon: <>{fill('M0 0H16V15H0Z', '#000')}{line('M13 1V9C13 12 12 13 2 13', '#0a0', 1.6)}{line('M2 5H6M4 3V7', '#0c0')}{line('M15.500 1V14.500H2', '#e8d020', 0.8)}</> },
  { cells: ['none', 'none', 'line', 'end'], text: '刀路 - 5354.7K - r10該怎麼倒.NC - 程序', icon: <>{fill('M0 0H16V15H0Z', '#000')}<Waves c="#eee" /></> },
  { cells: ['none', 'none', 'end'], text: '', icon: <>{fill('M1 0V15L16 7.500Z', '#f00')}{fill('M0 0H3V14L0 15.500Z', '#800000')}</> },
];

const Guide = ({ kind }: { kind: Cell }) => {
  if (kind === 'none') return <span className="w-[19px] shrink-0" />;
  const short = kind === 'end' || kind === 'endMinus';
  const box = kind === 'root' || kind === 'teeMinus' || kind === 'endMinus' ? '−' : kind === 'teePlus' ? '+' : '';
  return (
    <span className="relative flex h-4 w-[19px] shrink-0">
      <i className={`w-2.5 border-dotted border-[#555] ${kind === 'root' ? '' : 'border-r'} ${short ? 'h-2' : 'h-4'}`} />
      {kind !== 'line' && <i className="h-2 flex-1 border-b border-dotted border-[#555]" />}
      {box && (
        <button
          aria-label={box === '+' ? 'expand' : 'collapse'}
          className="absolute top-[3px] left-[5px] flex h-[9px] w-[9px] items-center justify-center border border-[#919191] bg-[#f7f7f7]"
        >
          <svg viewBox="0 0 7 7" className="h-[7px] w-[7px]">
            {line(box === '+' ? 'M1 3.500H6M3.500 1V6' : 'M1 3.500H6', '#3a5a9a')}
          </svg>
        </button>
      )}
    </span>
  );
};

const OperationsTree = () => (
  <div className="mr-0.5 mb-[22px] ml-0.5 flex min-h-0 flex-1 flex-col border border-[#c0c0c0] bg-white pt-0.5">
    <ul className="min-h-0 flex-1 overflow-hidden pl-[3px] font-[Liberation_Sans,Noto_Sans_CJK_SC,sans-serif]">
      {tree.map((row, i) => (
        <li key={i} className="flex h-4 items-center whitespace-nowrap text-black">
          {row.cells.map((c, k) => <Guide key={k} kind={c} />)}
          <span className="flex w-[19px] shrink-0">
            <svg viewBox="0 0 16 16" className="h-4 w-4">{row.icon}</svg>
          </span>
          <span className={`pl-0.5 text-[12px] leading-4 ${row.selected ? 'flex-1 bg-[#e4e4e4]' : ''}`}>{row.text}</span>
        </li>
      ))}
    </ul>
    <div className="mb-0.5 flex h-4 items-center bg-[#f0f0f0] px-2">
      <i className="border-y-3 border-r-3 border-y-transparent border-r-[#333]" />
      <div className="ml-2 flex h-[15px] w-[226px] items-center justify-center gap-0.5 rounded-xs border border-[#979797] bg-gradient-to-b from-[#f4f4f4] to-[#cacaca]">
        <i className="h-1.5 w-px bg-[#444]" /><i className="h-1.5 w-px bg-[#444]" /><i className="h-1.5 w-px bg-[#444]" />
      </div>
      <i className="ml-auto border-y-3 border-l-3 border-y-transparent border-l-[#333]" />
    </div>
  </div>
);

const ToolpathPanel = () => (
  <aside className="flex w-[309px] shrink-0 flex-col bg-[#fafafa]">
    <div className="bg-[#f0f0f0] pb-0.5">
      <header className="flex h-[35px] items-center pl-1 text-[#666]">
        <h2 className="text-[20px] leading-6 text-[#222]">刀路</h2>
        <div className="ml-auto flex items-center gap-2 pr-[5px]">
          <button aria-label="menu"><i className="block border-x-4 border-t-4 border-x-transparent border-t-[#666]" /></button>
          <button aria-label="pin"><svg viewBox="0 0 10 10" className="h-2.5 w-2.5">{line('M3 0.500H7V5.500H3ZM1 5.500H9M5 6V10M6.500 0V6', '#666')}</svg></button>
          <button aria-label="close"><svg viewBox="0 0 10 10" className="h-2.5 w-2.5">{line('M1 1L9 9M9 1L1 9', '#555', 1.5)}</svg></button>
        </div>
      </header>
      <div className="flex h-6 items-center pl-0.5 opacity-60"><Tools items={panelOne} /></div>
      <div className="flex h-6 items-center pl-0.5 opacity-60"><Tools items={panelTwo} /></div>
    </div>
    <div className="h-1" />
    <OperationsTree />
  </aside>
);

/* ---------- model view ---------- */

const bigHoles: [number, number][] = [[128, 347], [313, 410], [498, 472], [115, 598], [157, 867], [342, 929], [528, 991]];
const smallHoles: [number, number][] = [[206, 506], [394, 569], [221, 756], [407, 818]];
const topCuts = ['M187 258L585 388', 'M268 225L660 356', 'M345 191L740 323', 'M428 160L823 291', 'M506 127L900 258', 'M585 95L980 226'];
const sideCuts = ['M616 447L645 1005', 'M697 412L725 972', 'M778 383L805 940', 'M856 350L884 908', 'M936 316L964 875', 'M1016 283L1045 842'];

const Model = () => (
  <g transform="translate(530 290) scale(.33333)" fill="none" stroke="#000" strokeWidth={4} strokeLinejoin="round">
    <path d="M106 290L662 62L1060 195L500 422Z" fill="#b75c31" stroke="none" />
    <path d="M62 330L106 290L662 62" />
    <path d="M535 445L1098 250L1124 792L565 1012Z" fill="#522816" stroke="none" />
    <path d="M564 1012L1124 792V812L1110 822L545 1048Z" fill="#8a4424" />
    <path d="M62 332L106 290L500 422L535 445L565 1030L545 1048L140 910L92 838Z" fill="#b5592e" stroke="none" />
    <path d="M92 838L140 910L545 1048M535 445L565 1030" />
    {topCuts.map(d => <path key={d} d={d} />)}
    {sideCuts.map(d => <path key={d} d={d} />)}
    {Array.from({ length: 13 }, (_, i) => (
      <path key={i} d={`M${606 + i * 40} ${996 - i * 15.8}Q${606 + i * 40} ${1012 - i * 15.8} ${600 + i * 40} ${1024 - i * 16}`} strokeWidth={3} />
    ))}

    <ellipse cx={307} cy={662} rx={78} ry={118} transform="rotate(-18 307 662)" fill="url(#bore)" />
    <path d="M225 633L345 586M280 548C240 610 290 710 330 775M308 553C285 620 340 720 380 740M345 585C350 640 370 690 391 705M315 773L380 750" strokeWidth={3} />
    {bigHoles.map(([x, y]) => (
      <g key={`${x}-${y}`} transform={`translate(${x} ${y}) rotate(-18)`}>
        <ellipse rx={27} ry={40} fill="url(#hole)" />
        <path d="M-24 -8L10 -12M-4 -38C-8 -8 2 20 17 28M10 -34C8 -10 16 6 26 12" strokeWidth={3} />
      </g>
    ))}
    {smallHoles.map(([x, y]) => (
      <g key={`${x}-${y}`} transform={`translate(${x} ${y}) rotate(-18)`}>
        <ellipse rx={15} ry={22} fill="url(#hole)" />
        <path d="M-12 -4L6 -8M0 -20C-2 -4 4 10 12 14" strokeWidth={3} />
      </g>
    ))}
    <ellipse cx={463} cy={970} rx={7} ry={10} transform="rotate(-18 463 970)" fill="#7a3a1c" />

    <path d="M545 468L1100 248L1112 262L1110 282L1050 290L555 503Z" fill="url(#cusp)" stroke="none" />
    <path d="M500 422L1060 196L1092 205L1104 238L1100 249L545 470L535 442Z" fill="#0080ff" stroke="none" />
    <g stroke="#0a5cb8" strokeWidth={2}>
      <path d="M505 420L1060 196" strokeDasharray="16 10" />
      <path d="M560 440L1080 235" strokeDasharray="2 30" />
      <path d="M620 375L640 385M700 345L720 358M780 312L800 325M860 280L880 292M940 246L960 259M1015 216L1035 228" />
    </g>

    <g strokeWidth={3}>
      <path d="M60 273L620 47" stroke="#fff" strokeWidth={4} /><path d="M60 273L620 47" stroke="#000" strokeDasharray="24 34" strokeDashoffset={-70} />
      <path d="M60 275L535 432M620 47L1092 208M535 432L1090 208" stroke="#fff" />
      <path d="M60 275L535 432M620 47L1092 208" stroke="#e00010" strokeDasharray="30 8 12 3 3 3" />
      <path d="M535 432L1090 208" stroke="#e00040" strokeDasharray="26 12" />
      <path d="M62 332L91 838M535 432L568 1053M1095 208L1126 828M92 897L568 1053" stroke="#e8d4d0" />
      <path d="M62 332L91 838M535 432L568 1053M1095 208L1126 828M92 897L568 1053" stroke="#e00010" strokeWidth={4} strokeDasharray="28 8" />
      <path d="M60 275L62 332M91 838L93 897L120 886M620 47V78L662 62" stroke="#f00" />
      <path d="M568 1053L1126 828" stroke="#fff" /><path d="M568 1053L1126 828" stroke="#f00" strokeDasharray="26 26" />
      <path d="M490 225L501 418M538 242L553 490" stroke="#ffe600" strokeWidth={4} />
    </g>
  </g>
);

const Viewport = () => (
  <svg
    viewBox="339 168 997 507"
    preserveAspectRatio="xMidYMid slice"
    className="min-h-0 w-full flex-1 bg-gradient-to-b from-[#929ca7] to-white"
    role="img"
    aria-label="model"
  >
    <defs>
      <linearGradient id="bore" x1="0" y1="0" x2="0.500" y2="1">
        <stop offset="0" stopColor="#5a2a14" /><stop offset="0.600" stopColor="#a04f29" /><stop offset="1" stopColor="#bf6232" />
      </linearGradient>
      <linearGradient id="hole" x1="0" y1="0" x2="0.300" y2="1">
        <stop offset="0" stopColor="#4c2412" /><stop offset="1" stopColor="#c0622f" />
      </linearGradient>
      <pattern id="cusp" width="22" height="17" patternUnits="userSpaceOnUse" patternTransform="rotate(-50)">
        <path d="M1 2L5 8M9 1L13 7L11 14M18 3L21 11M3 12L7 16M15 12L17 16M6 5L9 9M13 2L17 5M0 10L3 8" stroke="#0c62c4" strokeWidth="2" fill="none" />
      </pattern>
    </defs>
    <path d="M720.500 370L739 675" stroke="#666" strokeWidth={1} />
    <Model />
    <g stroke="#6b6b6b" strokeWidth={1}>
      <path d="M711 168L720.500 370M339 242L1336 577M339 525L1218 168" />
    </g>
    <g strokeWidth={2}>
      <path d="M394.500 620V595" stroke="#00009c" /><path d="M390.500 598L393.500 586L397 598Z" fill="#0000b0" />
      <path d="M394 620L411 612.500" stroke="#008000" /><path d="M407 610L419 609L411 616Z" fill="#009a00" />
      <path d="M394 620L411 625" stroke="#a00000" /><path d="M409 622L419 627.500L409 628Z" fill="#d00000" />
    </g>
    <g className="font-[DejaVu_Sans,sans-serif] text-[12px] font-bold">
      <text x={390} y={584} fill="#0000d0">Z</text>
      <text x={421} y={611} fill="#00d000">Y</text>
      <text x={419} y={633} fill="#f00">X</text>
    </g>
    <path d="M1216.500 640V664M1312.500 640V664M1216 651.500H1313" stroke="#000" />
    <g textAnchor="middle" className="font-[DejaVu_Sans,Noto_Sans_CJK_SC,sans-serif] text-[12px] font-bold">
      <text x={1266} y={649}>67.397 mm</text>
      <text x={1266} y={664}>公制</text>
    </g>
  </svg>
);

/* ---------- bars ---------- */

const menus = ['文件(F)', '编辑(E)', '视图(V)', '分析(A)', '绘图(C)', '实体(S)', '建模(P)', '转换(X)', '机床类型(M)', '刀路(T)', '屏幕(R)', '设置(I)', '帮助(H)'];

const cell = 'flex h-[23px] shrink-0 items-center justify-center bg-white leading-4 text-black';

const LineSelect = ({ label, value, children, width }: { label: string; value: string; children: React.ReactNode; width: string }) => (
  <span className={`${cell} ${width} relative`}>
    <select aria-label={label} className="absolute inset-0 h-full w-full appearance-none text-transparent"><option>{value}</option></select>
    <span className="pointer-events-none relative flex w-full items-center justify-between px-2">
      {children}
      <i className="border-x-3 border-t-3 border-x-transparent border-t-[#777]" />
    </span>
  </span>
);

const StatusBar = () => (
  <footer className="flex h-[26px] shrink-0 items-center gap-0.5 bg-[#606060]">
    <p className="pl-1 text-[11px] leading-4 whitespace-pre text-white">WCS: 俯视图  刀具/绘图平面: 俯视图</p>
    <button className={`${cell} ml-auto w-6 font-[Liberation_Mono,monospace] text-[10px]`}>3D</button>
    <button className={`${cell} w-[60px] text-[12px]`}>屏幕视图</button>
    <button className={`${cell} w-11 font-[Liberation_Mono,monospace] text-[10px]`}>WCS</button>
    <button className={`${cell} w-[26px] text-[12px]`}>平面</button>
    <label className={`${cell} w-[97px] text-[11px]`}>
      <span className="flex h-full w-3.5 items-center justify-center bg-[#f0f0f0]">Z</span>
      <span className="relative flex flex-1 pl-0.5">
        <select className="h-[18px] w-full appearance-none bg-linear-to-r from-[#ffff80] from-75% to-white to-75% pl-0.5"><option>0.0</option></select>
        <i className="pointer-events-none absolute top-2 right-1 border-x-4 border-t-4 border-x-transparent border-t-black" />
      </span>
    </label>
    <button aria-label="levels" className={`${cell} w-[31px]`}><svg viewBox="0 0 12 12" className="mb-1.5 h-3 w-3">{line('M0.500 0.500H7.500V7.500H0.500ZM4.500 3.500H11.500V11.500H4.500Z', '#555')}</svg></button>
    <button aria-label="solid color" className={`${cell} w-[31px] flex-col gap-0.5`}><svg viewBox="0 0 16 16" className="h-3 w-3"><Cube top="#999" left="#333" right="#666" /></svg><i className="h-1.5 w-[27px] bg-[#808080]" /></button>
    <button aria-label="surface color" className={`${cell} w-[31px] flex-col gap-0.5`}><svg viewBox="0 0 12 12" className="h-3 w-3">{fill('M1.500 3L10.500 1V10L1.500 11Z', '#ccc')}{line('M1.500 3L10.500 1V10L1.500 11ZM6 2V11M1.500 7L10.500 5.500', '#666', 1.4)}</svg><i className="h-1.5 w-[27px] bg-[#ff8040]" /></button>
    <label className={`${cell} w-[130px] text-[11px]`}>
      <span className="flex h-full w-7 items-center bg-[#f0f0f0] pl-0.5">层别</span>
      <span className="relative flex flex-1">
        <select className="h-[18px] w-full appearance-none pl-0.5"><option>1</option></select>
        <i className="pointer-events-none absolute top-2 right-1 border-x-4 border-t-4 border-x-transparent border-t-black" />
      </span>
    </label>
    <button className={`${cell} w-8 text-[12px]`}>属性</button>
    <LineSelect label="point style" value="star" width="w-[42px]">
      <svg viewBox="0 0 9 9" className="h-[9px] w-[9px]">{line('M0 4.500H9M4.500 0V9M2 7L7 2', '#000')}</svg>
    </LineSelect>
    <LineSelect label="line width" value="thick" width="w-[61px]"><i className="-ml-1 h-[3px] w-[38px] bg-black" /></LineSelect>
    <LineSelect label="line style" value="solid" width="w-[67px]"><i className="-ml-1 h-px w-11 bg-black" /></LineSelect>
    <button className={`${cell} w-[38px] text-[12px]`}>群组</button>
    <button className={`${cell} w-[18px] font-[Liberation_Mono,monospace] text-[11px]`}>?</button>
  </footer>
);

const taskButton = 'flex h-[38px] items-center justify-center rounded-sm border border-white/70 bg-linear-to-br';

const Taskbar = () => (
  <nav className="relative flex h-[39px] shrink-0 items-center border-t border-[#1d3f58] bg-[linear-gradient(58deg,transparent_0_68%,#ffffff00_68%,#8fb8d866_70%,#ffffff00_72%),linear-gradient(90deg,#1a5488_0%,#1f6ba6_4%,#3f9bcb_13%,#62b0d8_20%,#4aa3d4_30%,#3590cc_41%,#2a7cc6_55%,#2171bd_66%,#1b5a98_69%,#194f8a_80%,#174a80_100%)]">
    <button aria-label="start" className="ml-[9px] flex">
      <svg viewBox="0 0 36 36" className="h-9 w-9">
        <defs>
          <radialGradient id="orb" cx=".5" cy=".9" r=".9"><stop offset="0" stopColor="#4fd0f5" /><stop offset=".5" stopColor="#23639a" /><stop offset="1" stopColor="#b4c8d8" /></radialGradient>
        </defs>
        <circle cx={18} cy={18} r={17} fill="url(#orb)" stroke="#1c3f60" />
        <path d="M11 9C14 7 16 7 18.500 9L16.500 17C14 15 11.500 15 9 17Z" fill="#ee5a24" />
        <path d="M20 10C23 12 26 12 29 9.500L27 17.500C24 20 21 19.500 18 17.500Z" fill="#8cc63f" />
        <path d="M8.500 18.500C11 16.500 13.500 16.500 16 18.500L14 26C11.500 24 9 24 6.500 26Z" fill="#3b9cea" />
        <path d="M17.500 19C20.500 21 23.500 21 26.500 19L24.500 26.500C21.500 29 18.500 28.500 15.500 26.500Z" fill="#ffd02a" />
      </svg>
    </button>
    <button aria-label="media player" className="ml-[30px] flex">
      <svg viewBox="0 0 26 24" className="h-6 w-[26px]">
        <path d="M1 1H20V23H1Z" fill="#8fc5e8" /><path d="M22 2V22M24.500 3V21" stroke="#a9d3ee" strokeWidth={1.4} />
        <circle cx={11} cy={12} r={8.500} fill="#f47b20" stroke="#fff" strokeWidth={0.8} /><path d="M8 7L16 12L8 17Z" fill="#fff" />
      </svg>
    </button>
    <button aria-label="browser" className={`${taskButton} ml-[21px] w-[58px] from-[#a9dcec] to-[#5fafd6]`}>
      <svg viewBox="0 0 30 30" className="h-[30px] w-[30px]">
        <circle cx={15} cy={16} r={12.500} fill="#58b629" stroke="#eaf8df" strokeWidth={1.5} />
        <path d="M8 16H22C22 7 9 7 8.500 16C9 24 19 25 22 19" fill="none" stroke="#fff" strokeWidth={3.4} />
        <path d="M2 26C-1 17 20 0 28 2" fill="none" stroke="#49ad1f" strokeWidth={2} />
      </svg>
    </button>
    <button aria-label="Mastercam X9" className={`${taskButton} ml-1 w-[54px] from-[#e8f6fb] to-[#7fc0de]`}>
      <svg viewBox="0 0 32 32" className="h-8 w-8">
        <path d="M2 5H10L25 29H17Z" fill="#333" /><path d="M18 5H24L10 29H2Z" fill="#666" />
        <circle cx={27} cy={5.500} r={3} fill="none" stroke="#d3232f" strokeWidth={2.5} /><path d="M30 5C30 10 28 12 24 12" fill="none" stroke="#d3232f" strokeWidth={2.5} />
      </svg>
    </button>
    <i className="h-[38px] w-1 rounded-r-sm border-y border-r border-white/70 bg-[#7fc0de]" />
    <button aria-label="paint" className={`${taskButton} ml-1 w-[59px] from-[#8fcbe5] to-[#5fafd6]`}>
      <svg viewBox="0 0 32 32" className="h-8 w-8">
        <path d="M2 20C0 8 20 2 27 11C30 17 24 19 22 20C20 23 22 27 16 28C9 29 4 26 2 20Z" fill="#eef4fa" stroke="#6e9bbd" />
        <circle cx={7} cy={19} r={2.500} fill="#dc3c2e" /><circle cx={12} cy={13} r={2.500} fill="#48a83e" /><circle cx={19} cy={11} r={2.800} fill="#f0b428" /><circle cx={15} cy={20} r={2.500} fill="#5aa2d6" />
        <path d="M18 31L27 8" stroke="#e07b28" strokeWidth={3} /><path d="M25 9L25 2L31 1L30 10Z" fill="#b98a52" />
      </svg>
    </button>

    <div className="ml-auto flex items-center text-white">
      <div className="flex items-center pb-1">
        <button className="font-[Liberation_Mono,monospace] text-[11px]">CH</button>
        <svg viewBox="0 0 16 14" className="ml-2 h-3.5 w-4">{fill('M1 5H15V13H1Z', '#d8d4cc')}{line('M3 7.500H13M3 9.500H13M5 11.500H11', '#666')}{line('M7 5C8 1 11 4 14 1', '#d8d4cc')}</svg>
        <svg viewBox="0 0 16 16" className="ml-2 h-4 w-4"><circle cx={8} cy={8} r={7.500} fill="#0a22c0" stroke="#9db4e8" />{line('M5.500 6C5.500 3 10.500 3 10.500 6C10.500 8 8 8 8 10', '#fff', 2)}{fill('M7 11H9V13H7Z', '#fff')}</svg>
        <svg viewBox="0 0 8 18" className="ml-2.5 h-[18px] w-2">{line('M2.500 0.500H7.500V4H2.500ZM0.500 2.500H5.500V6H0.500Z', '#fff')}{fill('M1 14H7L4 17Z', '#fff')}</svg>
      </div>
      <button aria-label="show hidden icons" className="ml-[92px]"><i className="block border-x-3 border-b-4 border-x-transparent border-b-white" /></button>
      <div className="ml-3 flex items-center gap-2">
        <svg viewBox="0 0 16 16" className="h-4 w-4"><path d="M8 0.500L15 3C15 10 13 13 8 15.500C3 13 1 10 1 3Z" fill="#4ba52e" stroke="#fff" strokeWidth={1.2} />{fill('M9 3L5 9H8L7 13L11 7H8Z', '#fff')}</svg>
        <svg viewBox="0 0 16 16" className="h-4 w-4"><circle cx={8} cy={8} r={7.500} fill="#f2e020" />{fill('M1 5C4 -1 12 -1 15 5L12 9H4Z', '#2f9a2a')}{line('M8 3V13', '#fff', 2)}</svg>
        <svg viewBox="0 0 16 16" className="h-4 w-4">{line('M3 1V16', '#fff', 1.5)}{fill('M4 2H9L10 4H15V10H9L8 8H4Z', '#fff')}</svg>
        <svg viewBox="0 0 16 16" className="h-4 w-4">{fill('M4 4H12V10H4ZM5 1H7V4H5ZM9 1H11V4H9Z', '#fff')}{line('M8 10V15H1V5', '#fff', 1.4)}</svg>
        <svg viewBox="0 0 16 16" className="h-4 w-4">{line('M5 3.500H15V11H5ZM10 11V14M2 1V6H5', '#fff', 1.4)}</svg>
        <svg viewBox="0 0 16 16" className="h-4 w-4">{fill('M1 6H4L8 2V14L4 10H1Z', '#fff')}{line('M10 5C12 7 12 9 10 11M12 3C15 6 15 10 12 13', '#fff')}</svg>
      </div>
      <time className="ml-3.5 w-16 text-center text-[12px] leading-[18px]">21:44<br />2016/1/20</time>
      <button aria-label="show desktop" className="ml-1.5 h-[38px] w-3.5 border border-[#5f86aa] bg-linear-to-br from-[#4f7ba6] to-[#173f6c]" />
    </div>
    <p className="absolute right-5 bottom-0 font-[DejaVu_Sans,Noto_Sans_CJK_SC,sans-serif] text-[16px] leading-6 font-bold text-[#f02a30] [text-shadow:1px_0_#fff,-1px_0_#fff,0_1px_#fff,0_-1px_#fff]">三维网www.3dportal.cn</p>
  </nav>
);

const MoreChevron = () => (
  <button aria-label="more tools" className="mt-auto mb-1 self-end px-1">
    <svg viewBox="0 0 7 9" className="h-[9px] w-[7px]">{line('M1 0.500L3.500 3L6 0.500M1 5L3.500 7.500L6 5', '#555', 1.4)}</svg>
  </button>
);

export default function App() {
  return (
    <div className="flex h-screen flex-col overflow-hidden bg-[#f0f0f0] font-[Noto_Sans,Noto_Sans_CJK_SC,sans-serif] text-[12px] text-[#222]">
      <header className="flex h-[22px] shrink-0 items-center">
        <svg viewBox="0 0 16 16" className="ml-0.5 h-4 w-4">{fill('M1 1H6L15 15H10Z', '#111')}{fill('M11 1H15L6 15H1Z', '#555')}{line('M1 9L8 5', '#fff', 1)}{line('M9 2L15 1', '#b8a850', 1)}</svg>
        <h1 className="ml-[7px] text-[11px] leading-4 whitespace-pre text-[#444]">Mastercam 铣削 X9  C:\Users\Lenovo\Desktop\r10該怎麼倒.mcx-9</h1>
        <div className="ml-auto flex items-center gap-[17px] pr-[9px]">
          <button aria-label="minimize"><svg viewBox="0 0 10 10" className="h-2.5 w-2.5">{fill('M1 7H7V9H1Z', '#666')}</svg></button>
          <button aria-label="restore"><svg viewBox="0 0 10 10" className="h-2.5 w-2.5">{line('M3 3V1H9V6H7M0.500 4H6.500V9H0.500Z', '#666', 1.4)}</svg></button>
          <button aria-label="close"><svg viewBox="0 0 10 10" className="h-2.5 w-2.5">{line('M1 1L9 9M9 1L1 9', '#555', 1.6)}</svg></button>
        </div>
      </header>

      <nav className="flex h-[23px] shrink-0 items-center gap-[17px] pl-4">
        {menus.map(m => <button key={m} className="text-[11px] leading-4 whitespace-nowrap text-black">{m}</button>)}
      </nav>

      <div className="flex h-[27px] shrink-0 items-center"><Tools items={rowOne} /></div>
      <div className="flex h-[26px] shrink-0 items-center"><Tools items={rowTwo} /></div>
      <div className="flex h-[33px] shrink-0 items-start pt-1">
        <div className="flex items-center">
          <Tools items="grip0" />
          <Coord axis="X" value="-75.28153" />
          <Coord axis="Y" value="-73.24983" />
          <Coord axis="Z" value="0.0" />
          <Tools items={rowThree} />
        </div>
      </div>

      <main className="flex min-h-0 flex-1">
        <div className="flex w-[26px] shrink-0 flex-col items-center"><SideTools items={leftBar} /><MoreChevron /></div>
        <ToolpathPanel />
        <section className="ml-1 flex min-w-0 flex-1 flex-col">
          <div className="flex h-[33px] shrink-0 items-center bg-[#fafafa]">
            <p className="flex-1 pl-[188px] text-[12px] leading-4 text-black">功能状态栏</p>
            <button aria-label="expand" className="flex h-full w-3 items-center justify-center bg-[#e0e0e0]"><i className="border-y-4 border-l-4 border-y-transparent border-l-[#666]" /></button>
          </div>
          <div className="h-1 shrink-0" />
          <Viewport />
          <div className="h-0.5 shrink-0 border-b border-[#c0c0c0] bg-[#f0f0f0]" />
          <div className="flex h-[26px] shrink-0 bg-white pt-[3px]">
            <button className="w-[54px] pl-2 text-[11px] leading-5 text-[#333]">浪跌虫</button>
            <i className="flex-1 border-t border-l border-[#c0c0c0] bg-[#f0f0f0]" />
          </div>
        </section>
        <div className="flex w-[30px] shrink-0 flex-col items-center"><SideTools items={rightBar} /><MoreChevron /></div>
      </main>

      <StatusBar />
      <Taskbar />
    </div>
  );
}
